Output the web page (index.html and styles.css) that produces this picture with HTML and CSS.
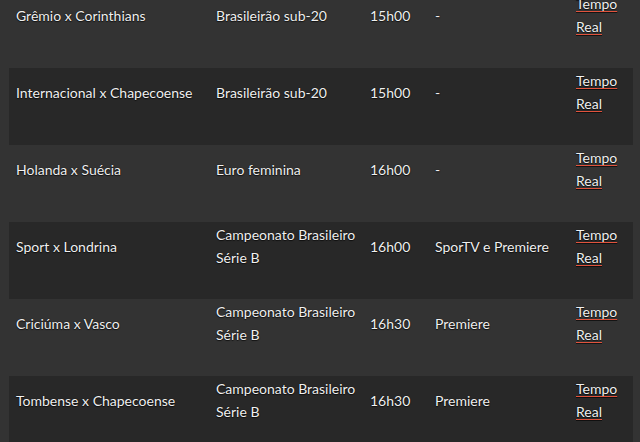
FILE: index.html
```html
<!DOCTYPE html>
<html lang="pt-BR">
<head>
<meta charset="utf-8">
<title>Jogos</title>
<link rel="stylesheet" href="styles.css">
</head>
<body>
<div class="table">
  <div class="row odd first">
    <div class="cell">Grêmio x Corinthians</div>
    <div class="cell">Brasileirão sub-20</div>
    <div class="cell">15h00</div>
    <div class="cell">-</div>
    <div class="cell top"><a href="#">Tempo Real</a></div>
  </div>
  <div class="row even">
    <div class="cell">Internacional x Chapecoense</div>
    <div class="cell">Brasileirão sub-20</div>
    <div class="cell">15h00</div>
    <div class="cell">-</div>
    <div class="cell top"><a href="#">Tempo Real</a></div>
  </div>
  <div class="row odd">
    <div class="cell">Holanda x Suécia</div>
    <div class="cell">Euro feminina</div>
    <div class="cell">16h00</div>
    <div class="cell">-</div>
    <div class="cell top"><a href="#">Tempo Real</a></div>
  </div>
  <div class="row even">
    <div class="cell">Sport x Londrina</div>
    <div class="cell top">Campeonato Brasileiro Série B</div>
    <div class="cell">16h00</div>
    <div class="cell">SporTV e Premiere</div>
    <div class="cell top"><a href="#">Tempo Real</a></div>
  </div>
  <div class="row odd">
    <div class="cell">Criciúma x Vasco</div>
    <div class="cell top">Campeonato Brasileiro Série B</div>
    <div class="cell">16h30</div>
    <div class="cell">Premiere</div>
    <div class="cell top"><a href="#">Tempo Real</a></div>
  </div>
  <div class="row even">
    <div class="cell">Tombense x Chapecoense</div>
    <div class="cell top">Campeonato Brasileiro Série B</div>
    <div class="cell">16h30</div>
    <div class="cell">Premiere</div>
    <div class="cell top"><a href="#">Tempo Real</a></div>
  </div>
</div>
</body>
</html>
```
FILE: styles.css
```css
html, body {
  margin: 0;
  padding: 0;
  background: #333333;
}
body {
  font-family: "Lato", "Noto Sans", sans-serif;
  font-size: 14px;
  color: #f0f0f0;
  text-shadow: 0 0 1px #000, 0 1px 1px rgba(0, 0, 0, 0.6);
}
.table {
  margin-top: -9px;
  margin-left: 9px;
  width: 624px;
}
.row {
  display: grid;
  grid-template-columns: 200px 154px 65px 141px 64px;
  height: 77px;
  box-sizing: border-box;
  padding-top: 1px;
}
.row.even {
  background: #282828;
}
.cell {
  padding: 0 7px;
  height: 46px;
  line-height: 23px;
  display: flex;
  align-items: center;
}
.cell.top {
  align-items: flex-start;
}
a {
  color: #f0f0f0;
  text-decoration: underline;
  text-decoration-color: #e0533d;
  text-underline-offset: 2px;
  text-decoration-thickness: 1px;
}
```
